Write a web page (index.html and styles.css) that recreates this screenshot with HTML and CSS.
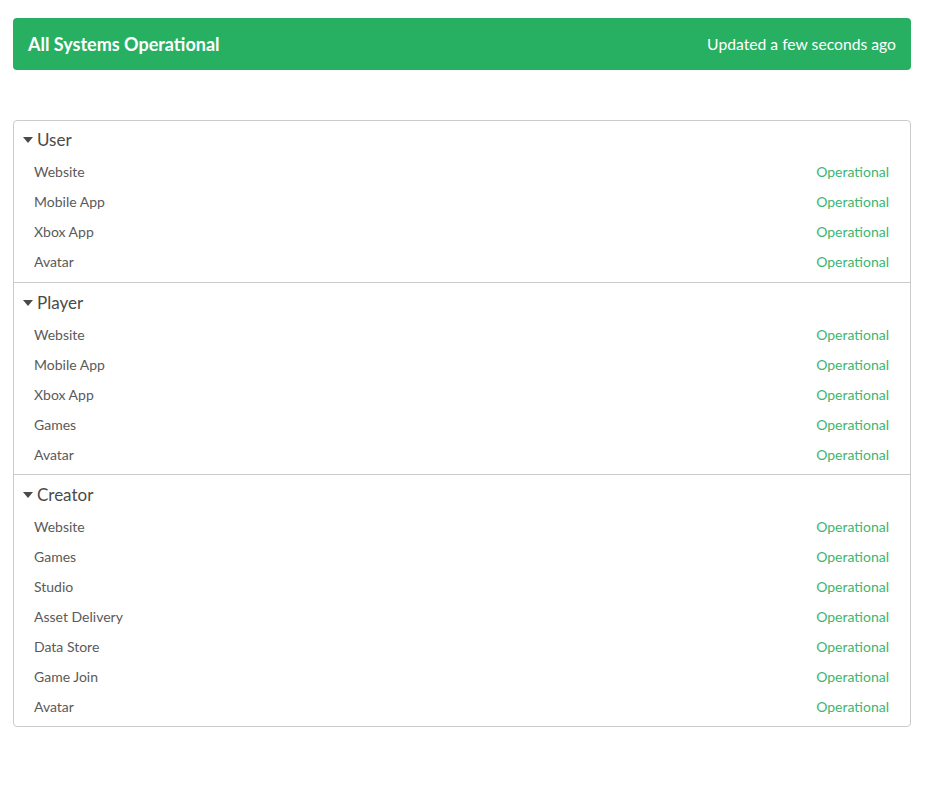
FILE: index.html
```html
<!DOCTYPE html>
<html>
<head>
<meta charset="utf-8">
<link rel="stylesheet" href="styles.css">
</head>
<body>
<div class="page">
  <div class="banner">
    <span class="banner-title">All Systems Operational</span>
    <span class="banner-updated">Updated a few seconds ago</span>
  </div>
  <div class="panel">
    <div class="group">
      <div class="group-head"><span class="caret"></span>User</div>
      <div class="row"><span class="name">Website</span><span class="status">Operational</span></div>
      <div class="row"><span class="name">Mobile App</span><span class="status">Operational</span></div>
      <div class="row"><span class="name">Xbox App</span><span class="status">Operational</span></div>
      <div class="row"><span class="name">Avatar</span><span class="status">Operational</span></div>
    </div>
    <div class="group">
      <div class="group-head"><span class="caret"></span>Player</div>
      <div class="row"><span class="name">Website</span><span class="status">Operational</span></div>
      <div class="row"><span class="name">Mobile App</span><span class="status">Operational</span></div>
      <div class="row"><span class="name">Xbox App</span><span class="status">Operational</span></div>
      <div class="row"><span class="name">Games</span><span class="status">Operational</span></div>
      <div class="row"><span class="name">Avatar</span><span class="status">Operational</span></div>
    </div>
    <div class="group">
      <div class="group-head"><span class="caret"></span>Creator</div>
      <div class="row"><span class="name">Website</span><span class="status">Operational</span></div>
      <div class="row"><span class="name">Games</span><span class="status">Operational</span></div>
      <div class="row"><span class="name">Studio</span><span class="status">Operational</span></div>
      <div class="row"><span class="name">Asset Delivery</span><span class="status">Operational</span></div>
      <div class="row"><span class="name">Data Store</span><span class="status">Operational</span></div>
      <div class="row"><span class="name">Game Join</span><span class="status">Operational</span></div>
      <div class="row"><span class="name">Avatar</span><span class="status">Operational</span></div>
    </div>
  </div>
</div>
</body>
</html>
```
FILE: styles.css
```css
html, body {
  margin: 0;
  padding: 0;
  background: #fff;
}
body {
  font-family: Lato, "Open Sans", sans-serif;
  color: #555;
}
.page {
  width: 898px;
  padding: 18px 0 0 13px;
}
.banner {
  background: #28b062;
  border-radius: 4px;
  height: 52px;
  padding: 0 15px;
  display: flex;
  align-items: center;
  justify-content: space-between;
  color: #fff;
}
.banner-title {
  font-size: 18px;
  font-weight: 700;
}
.banner-updated {
  font-size: 15.7px;
}
.panel {
  margin-top: 50px;
  border: 1px solid #cbcbcb;
  border-radius: 4px;
}
.group {
  padding: 6px 0 5px 0;
}
.group:first-child {
  padding-bottom: 6px;
}
.group + .group {
  border-top: 1px solid #cbcbcb;
  padding-top: 7px;
}
.group-head {
  height: 23px;
  padding-top: 1px;
  line-height: 23px;
  font-size: 17px;
  color: #4a4a4a;
  padding-left: 9px;
  margin-bottom: 5px;
  display: flex;
  align-items: center;
}
.caret {
  width: 0;
  height: 0;
  border-left: 5px solid transparent;
  border-right: 5px solid transparent;
  border-top: 6px solid #4a4a4a;
  margin-right: 4px;
  margin-top: 1px;
}
.row {
  height: 30px;
  display: flex;
  align-items: center;
  justify-content: space-between;
  padding: 0 21px 0 20px;
  font-size: 14px;
}
.name {
  color: #5a5a5a;
}
.status {
  color: #3cb671;
}
```
